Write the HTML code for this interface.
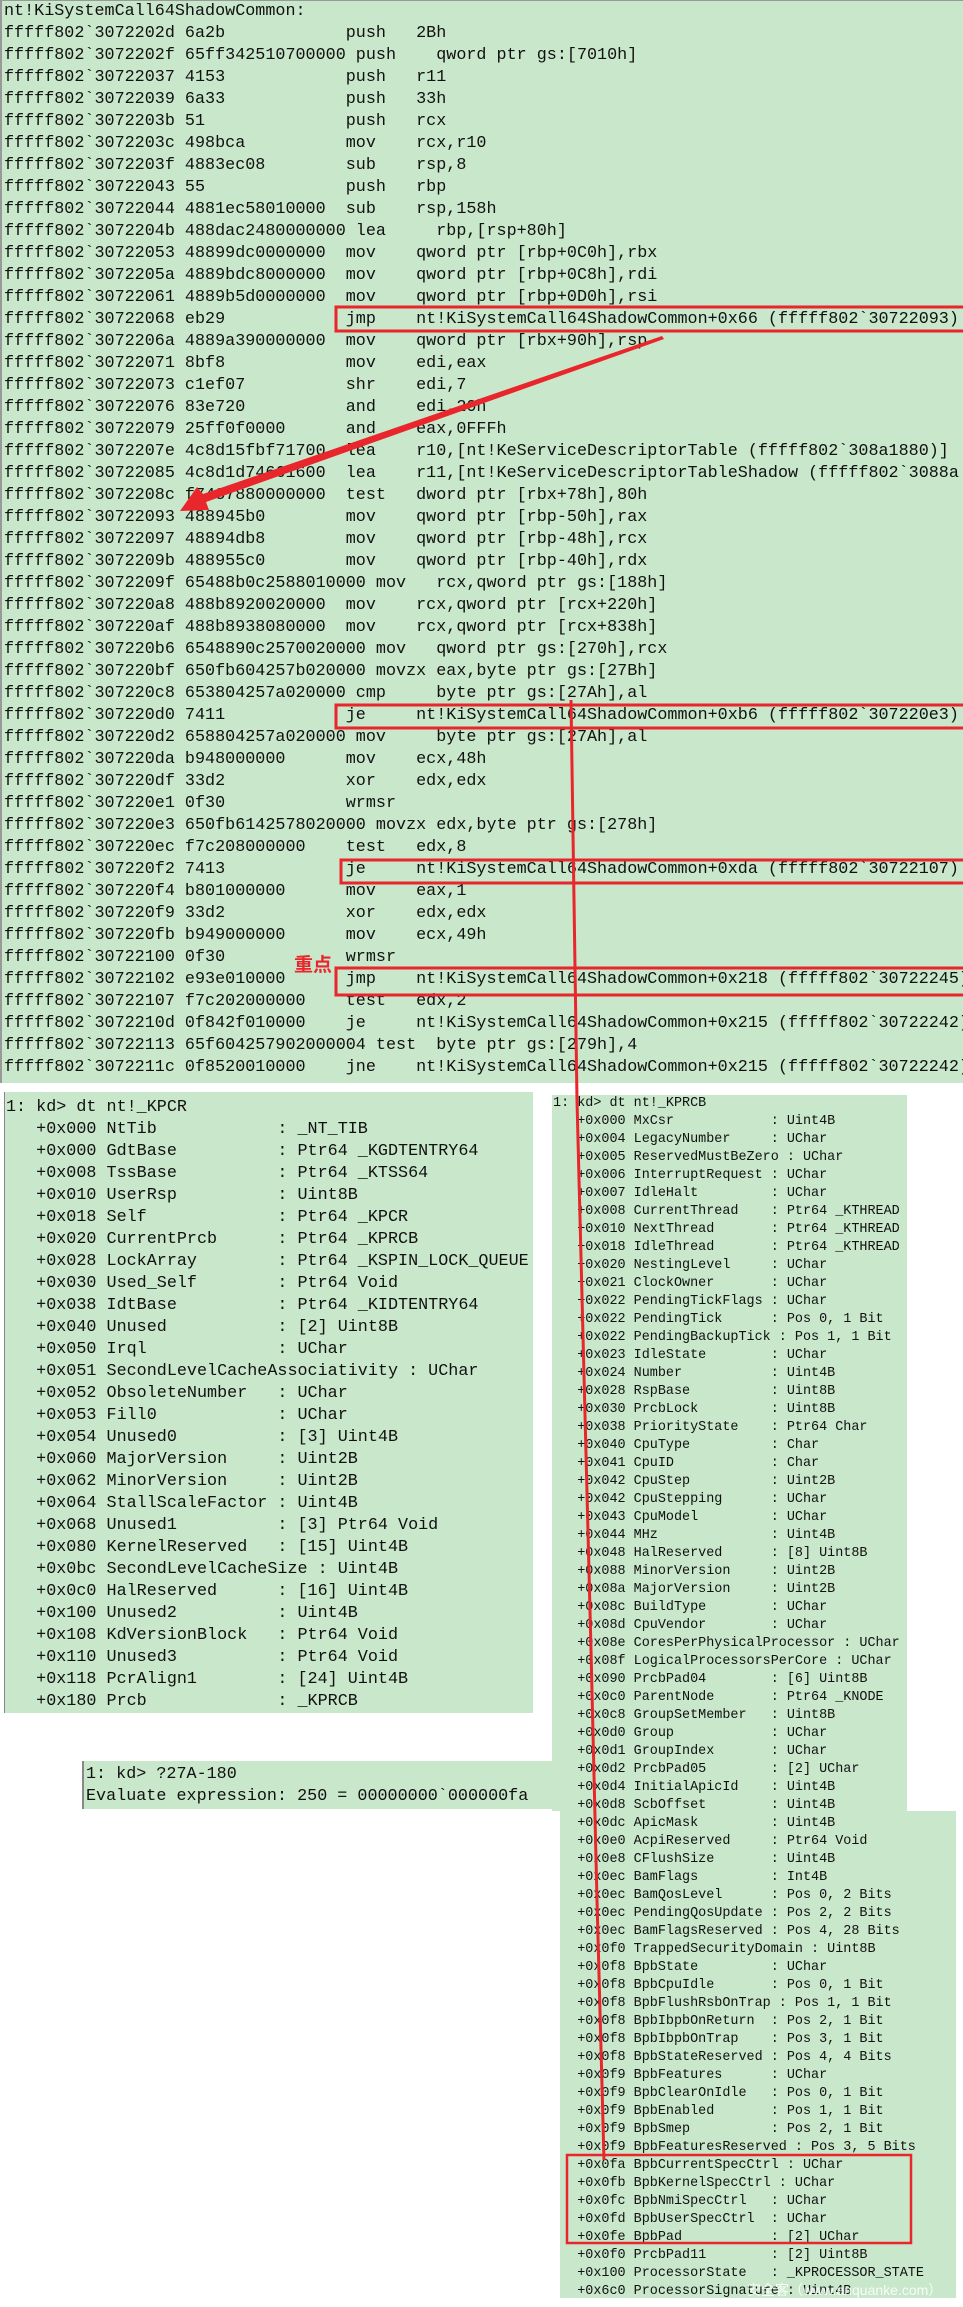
<!DOCTYPE html>
<html><head><meta charset="utf-8"><style>
html,body{margin:0;padding:0;background:#fff;}
body{width:963px;height:2307px;position:relative;overflow:hidden;}
.p{position:absolute;background:#c9e7cb;}
pre{margin:0;position:absolute;font-family:"Liberation Mono",monospace;color:#111;white-space:pre;}
.t{font-size:16.75px;line-height:22px;}
.s{font-size:13.45px;line-height:18px;}
.wm{position:absolute;left:747px;top:2280px;font-family:"Liberation Sans","Noto Sans CJK SC",sans-serif;font-size:14px;color:rgba(255,255,255,0.85);white-space:nowrap;}
</style></head><body>
<div class="p" style="left:0;top:0;width:963px;height:1083px;border-top:1px solid #999;border-left:2px solid #999;box-sizing:border-box;overflow:hidden;">
<pre class="t" style="left:2px;top:0;">nt!KiSystemCall64ShadowCommon:
fffff802`3072202d 6a2b            push   2Bh
fffff802`3072202f 65ff342510700000 push    qword ptr gs:[7010h]
fffff802`30722037 4153            push   r11
fffff802`30722039 6a33            push   33h
fffff802`3072203b 51              push   rcx
fffff802`3072203c 498bca          mov    rcx,r10
fffff802`3072203f 4883ec08        sub    rsp,8
fffff802`30722043 55              push   rbp
fffff802`30722044 4881ec58010000  sub    rsp,158h
fffff802`3072204b 488dac2480000000 lea     rbp,[rsp+80h]
fffff802`30722053 48899dc0000000  mov    qword ptr [rbp+0C0h],rbx
fffff802`3072205a 4889bdc8000000  mov    qword ptr [rbp+0C8h],rdi
fffff802`30722061 4889b5d0000000  mov    qword ptr [rbp+0D0h],rsi
fffff802`30722068 eb29            jmp    nt!KiSystemCall64ShadowCommon+0x66 (fffff802`30722093)
fffff802`3072206a 4889a390000000  mov    qword ptr [rbx+90h],rsp
fffff802`30722071 8bf8            mov    edi,eax
fffff802`30722073 c1ef07          shr    edi,7
fffff802`30722076 83e720          and    edi,20h
fffff802`30722079 25ff0f0000      and    eax,0FFFh
fffff802`3072207e 4c8d15fbf71700  lea    r10,[nt!KeServiceDescriptorTable (fffff802`308a1880)]
fffff802`30722085 4c8d1d74661600  lea    r11,[nt!KeServiceDescriptorTableShadow (fffff802`3088a
fffff802`3072208c f7437880000000  test   dword ptr [rbx+78h],80h
fffff802`30722093 488945b0        mov    qword ptr [rbp-50h],rax
fffff802`30722097 48894db8        mov    qword ptr [rbp-48h],rcx
fffff802`3072209b 488955c0        mov    qword ptr [rbp-40h],rdx
fffff802`3072209f 65488b0c2588010000 mov   rcx,qword ptr gs:[188h]
fffff802`307220a8 488b8920020000  mov    rcx,qword ptr [rcx+220h]
fffff802`307220af 488b8938080000  mov    rcx,qword ptr [rcx+838h]
fffff802`307220b6 6548890c2570020000 mov   qword ptr gs:[270h],rcx
fffff802`307220bf 650fb604257b020000 movzx eax,byte ptr gs:[27Bh]
fffff802`307220c8 653804257a020000 cmp     byte ptr gs:[27Ah],al
fffff802`307220d0 7411            je     nt!KiSystemCall64ShadowCommon+0xb6 (fffff802`307220e3)
fffff802`307220d2 658804257a020000 mov     byte ptr gs:[27Ah],al
fffff802`307220da b948000000      mov    ecx,48h
fffff802`307220df 33d2            xor    edx,edx
fffff802`307220e1 0f30            wrmsr
fffff802`307220e3 650fb6142578020000 movzx edx,byte ptr gs:[278h]
fffff802`307220ec f7c208000000    test   edx,8
fffff802`307220f2 7413            je     nt!KiSystemCall64ShadowCommon+0xda (fffff802`30722107)
fffff802`307220f4 b801000000      mov    eax,1
fffff802`307220f9 33d2            xor    edx,edx
fffff802`307220fb b949000000      mov    ecx,49h
fffff802`30722100 0f30            wrmsr
fffff802`30722102 e93e010000      jmp    nt!KiSystemCall64ShadowCommon+0x218 (fffff802`30722245)
fffff802`30722107 f7c202000000    test   edx,2
fffff802`3072210d 0f842f010000    je     nt!KiSystemCall64ShadowCommon+0x215 (fffff802`30722242)
fffff802`30722113 65f604257902000004 test  byte ptr gs:[279h],4
fffff802`3072211c 0f8520010000    jne    nt!KiSystemCall64ShadowCommon+0x215 (fffff802`30722242)</pre>
</div>

<div class="p" style="left:4px;top:1092px;width:529px;height:621px;border-left:1px solid #888;box-sizing:border-box;">
<pre class="t" style="left:1px;top:5px;">1: kd> dt nt!_KPCR
   +0x000 NtTib            : _NT_TIB
   +0x000 GdtBase          : Ptr64 _KGDTENTRY64
   +0x008 TssBase          : Ptr64 _KTSS64
   +0x010 UserRsp          : Uint8B
   +0x018 Self             : Ptr64 _KPCR
   +0x020 CurrentPrcb      : Ptr64 _KPRCB
   +0x028 LockArray        : Ptr64 _KSPIN_LOCK_QUEUE
   +0x030 Used_Self        : Ptr64 Void
   +0x038 IdtBase          : Ptr64 _KIDTENTRY64
   +0x040 Unused           : [2] Uint8B
   +0x050 Irql             : UChar
   +0x051 SecondLevelCacheAssociativity : UChar
   +0x052 ObsoleteNumber   : UChar
   +0x053 Fill0            : UChar
   +0x054 Unused0          : [3] Uint4B
   +0x060 MajorVersion     : Uint2B
   +0x062 MinorVersion     : Uint2B
   +0x064 StallScaleFactor : Uint4B
   +0x068 Unused1          : [3] Ptr64 Void
   +0x080 KernelReserved   : [15] Uint4B
   +0x0bc SecondLevelCacheSize : Uint4B
   +0x0c0 HalReserved      : [16] Uint4B
   +0x100 Unused2          : Uint4B
   +0x108 KdVersionBlock   : Ptr64 Void
   +0x110 Unused3          : Ptr64 Void
   +0x118 PcrAlign1        : [24] Uint4B
   +0x180 Prcb             : _KPRCB</pre>
</div>

<div class="p" style="left:82px;top:1761px;width:472px;height:48px;border-left:2px solid #888;box-sizing:border-box;">
<pre class="t" style="left:2px;top:3px;">1: kd> ?27A-180
Evaluate expression: 250 = 00000000`000000fa</pre>
</div>

<div class="p" style="left:552px;top:1095px;width:355px;height:716px;"></div>
<div class="p" style="left:560px;top:1811px;width:396px;height:487px;"></div>
<pre class="s" style="left:553px;top:1095px;">1: kd> dt nt!_KPRCB
   +0x000 MxCsr            : Uint4B
   +0x004 LegacyNumber     : UChar
   +0x005 ReservedMustBeZero : UChar
   +0x006 InterruptRequest : UChar
   +0x007 IdleHalt         : UChar
   +0x008 CurrentThread    : Ptr64 _KTHREAD
   +0x010 NextThread       : Ptr64 _KTHREAD
   +0x018 IdleThread       : Ptr64 _KTHREAD
   +0x020 NestingLevel     : UChar
   +0x021 ClockOwner       : UChar
   +0x022 PendingTickFlags : UChar
   +0x022 PendingTick      : Pos 0, 1 Bit
   +0x022 PendingBackupTick : Pos 1, 1 Bit
   +0x023 IdleState        : UChar
   +0x024 Number           : Uint4B
   +0x028 RspBase          : Uint8B
   +0x030 PrcbLock         : Uint8B
   +0x038 PriorityState    : Ptr64 Char
   +0x040 CpuType          : Char
   +0x041 CpuID            : Char
   +0x042 CpuStep          : Uint2B
   +0x042 CpuStepping      : UChar
   +0x043 CpuModel         : UChar
   +0x044 MHz              : Uint4B
   +0x048 HalReserved      : [8] Uint8B
   +0x088 MinorVersion     : Uint2B
   +0x08a MajorVersion     : Uint2B
   +0x08c BuildType        : UChar
   +0x08d CpuVendor        : UChar
   +0x08e CoresPerPhysicalProcessor : UChar
   +0x08f LogicalProcessorsPerCore : UChar
   +0x090 PrcbPad04        : [6] Uint8B
   +0x0c0 ParentNode       : Ptr64 _KNODE
   +0x0c8 GroupSetMember   : Uint8B
   +0x0d0 Group            : UChar
   +0x0d1 GroupIndex       : UChar
   +0x0d2 PrcbPad05        : [2] UChar
   +0x0d4 InitialApicId    : Uint4B
   +0x0d8 ScbOffset        : Uint4B
   +0x0dc ApicMask         : Uint4B
   +0x0e0 AcpiReserved     : Ptr64 Void
   +0x0e8 CFlushSize       : Uint4B
   +0x0ec BamFlags         : Int4B
   +0x0ec BamQosLevel      : Pos 0, 2 Bits
   +0x0ec PendingQosUpdate : Pos 2, 2 Bits
   +0x0ec BamFlagsReserved : Pos 4, 28 Bits
   +0x0f0 TrappedSecurityDomain : Uint8B
   +0x0f8 BpbState         : UChar
   +0x0f8 BpbCpuIdle       : Pos 0, 1 Bit
   +0x0f8 BpbFlushRsbOnTrap : Pos 1, 1 Bit
   +0x0f8 BpbIbpbOnReturn  : Pos 2, 1 Bit
   +0x0f8 BpbIbpbOnTrap    : Pos 3, 1 Bit
   +0x0f8 BpbStateReserved : Pos 4, 4 Bits
   +0x0f9 BpbFeatures      : UChar
   +0x0f9 BpbClearOnIdle   : Pos 0, 1 Bit
   +0x0f9 BpbEnabled       : Pos 1, 1 Bit
   +0x0f9 BpbSmep          : Pos 2, 1 Bit
   +0x0f9 BpbFeaturesReserved : Pos 3, 5 Bits
   +0x0fa BpbCurrentSpecCtrl : UChar
   +0x0fb BpbKernelSpecCtrl : UChar
   +0x0fc BpbNmiSpecCtrl   : UChar
   +0x0fd BpbUserSpecCtrl  : UChar
   +0x0fe BpbPad           : [2] UChar
   +0x0f0 PrcbPad11        : [2] Uint8B
   +0x100 ProcessorState   : _KPROCESSOR_STATE
   +0x6c0 ProcessorSignature : Uint4B</pre>
<div class="wm">安全客（www.anquanke.com）</div>

<svg width="963" height="2307" style="position:absolute;left:0;top:0;" xmlns="http://www.w3.org/2000/svg">
<g fill="none" stroke="#e8262b" stroke-width="3">
<rect x="336" y="307" width="640" height="24"/>
<rect x="336" y="705" width="640" height="23"/>
<rect x="341" y="860" width="640" height="23"/>
<rect x="336" y="968" width="640" height="27"/>
<rect x="567" y="2155" width="344" height="88" stroke-width="2.5"/>
<polyline points="571,700 574,900 577,1100 591,1650 597,1900 604,2160"/>
</g>
<polygon points="662,336 664,339 206,502 209,510 180,511 197,487 203,494" fill="#e8262b"/>
<text x="294" y="971" font-family="Liberation Sans,'Noto Sans CJK SC',sans-serif" font-size="19" font-weight="bold" fill="#e8262b">重点</text>
</svg>
</body></html>
